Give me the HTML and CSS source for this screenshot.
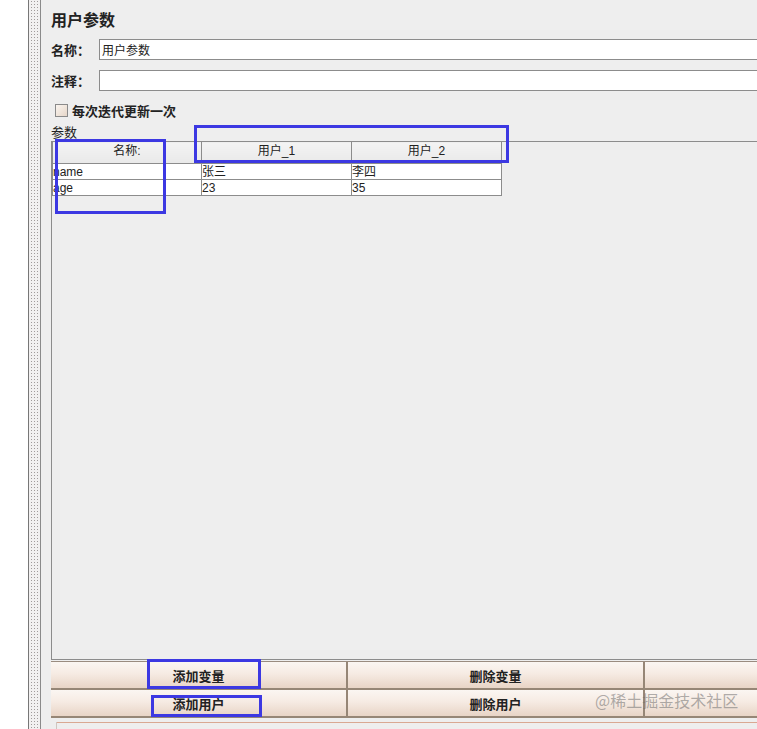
FILE: index.html
```html
<!DOCTYPE html>
<html lang="zh-CN">
<head>
    <meta charset="UTF-8">
    <title>用户参数</title>
    <link rel="stylesheet" href="styles.css">
</head>
<body>

<div class="app">
    <div class="gutter"></div>
    <div class="splitter"></div>

    <div class="panel">
        <!-- Title -->
        <div class="title">用户参数</div>

        <!-- Name / comment fields -->
        <div class="field-row">
            <label class="field-label">名称：</label>
            <input class="field-input" type="text" value="用户参数">
        </div>
        <div class="field-row second">
            <label class="field-label">注释：</label>
            <input class="field-input" type="text" value="">
        </div>

        <div class="check-row">
            <span class="check-box"></span>
            <span class="check-label">每次迭代更新一次</span>
        </div>

        <!-- Parameters table -->
        <div class="params-label">参数</div>
        <div class="params-box">
            <table class="params-table">
                <thead>
                    <tr>
                        <th class="col-name">名称:</th>
                        <th>用户_1</th>
                        <th>用户_2</th>
                    </tr>
                </thead>
                <tbody>
                    <tr><td>name</td><td>张三</td><td>李四</td></tr>
                    <tr><td>age</td><td>23</td><td>35</td></tr>
                </tbody>
            </table>
        </div>

        <!-- Buttons -->
        <div class="buttons">
            <button class="btn">添加变量</button>
            <button class="btn">删除变量</button>
            <button class="btn"></button>
            <button class="btn">添加用户</button>
            <button class="btn">删除用户</button>
            <button class="btn"></button>
        </div>

        <div class="status">
            <span class="status-box"></span>
            <span class="status-line"></span>
        </div>
    </div>
</div>

<!-- annotation boxes drawn over the screenshot -->
<div class="mark mark-name"></div>
<div class="mark mark-users"></div>
<div class="mark mark-add-var"></div>
<div class="mark mark-add-user"></div>

<div class="watermark">@稀土掘金技术社区</div>

</body>
</html>
```

FILE: styles.css
```css
body {
    margin: 0;
    background-color: white;
    font-family: "Liberation Sans", "Noto Sans CJK SC", sans-serif;
    color: #222;
    overflow: hidden;
    width: 757px;
    height: 729px;
    position: relative;
}

.app {
    display: flex;
    height: 729px;
    width: 1000px;
}

.gutter {
    width: 28px;
    background-color: white;
    border-right: 1px solid #777;
}

.splitter {
    width: 11px;
    border-right: 1px solid #8a8a8a;
    background-color: #f2f0f0;
    background-image: radial-gradient(#a09a9a 0.7px, transparent 0.9px);
    background-size: 3px 3px;
    background-position: 4px 0;
}

.panel {
    width: 921px;
    padding-left: 10px;
    background-color: #eeeeee;
    display: flex;
    flex-direction: column;
}

.title {
    margin-top: 8px;
    height: 22px;
    line-height: 22px;
    font-size: 16px;
    font-weight: bold;
    font-family: "Noto Sans CJK SC", sans-serif;
}

.field-row {
    display: flex;
    align-items: center;
    margin-top: 9px;
    height: 21px;
}

.field-row.second {
    margin-top: 10px;
}

.field-label {
    width: 48px;
    font-size: 13px;
    font-weight: bold;
    font-family: "Noto Sans CJK SC", sans-serif;
}

.field-input {
    flex: 1;
    height: 21px;
    box-sizing: border-box;
    border: 1px solid #8c8c8c;
    border-right: none;
    background-color: white;
    padding: 0 2px;
    font-size: 12px;
    font-family: "Noto Sans CJK SC", sans-serif;
    color: #222;
    outline: none;
}

.check-row {
    display: flex;
    align-items: center;
    margin-top: 12px;
    height: 14px;
    padding-left: 4px;
}

.check-box {
    width: 11px;
    height: 11px;
    border: 1px solid #8a8a8a;
    background: linear-gradient(135deg, #faf5f0, #e6d6c8);
    margin-right: 4px;
}

.check-label {
    font-size: 13px;
    font-weight: bold;
    font-family: "Noto Sans CJK SC", sans-serif;
}

.params-label {
    margin-top: 7px;
    height: 17px;
    line-height: 15px;
    font-size: 13px;
    font-family: "Noto Sans CJK SC", sans-serif;
}

.params-box {
    flex: 1;
    border-top: 1px solid #8c8c8c;
    border-left: 1px solid #8c8c8c;
    border-bottom: 1px solid #8c8c8c;
    margin-bottom: 1px;
}

.params-table {
    border-collapse: collapse;
    margin-top: -1px;
    font-size: 12px;
}

.params-table th {
    width: 150px;
    height: 22px;
    padding: 0 0 3px;
    border: 1px solid #8c8c8c;
    background: linear-gradient(#f4f4f4, #e9e9e9);
    font-weight: normal;
    font-family: "Liberation Sans", "Noto Sans CJK SC", sans-serif;
    line-height: 16px;
    box-sizing: border-box;
    vertical-align: middle;
}

.params-table th.col-name {
    width: 149px;
}

.params-table td {
    height: 15px;
    padding: 0;
    border: 1px solid #8c8c8c;
    background-color: white;
    line-height: 14px;
    font-family: "Liberation Sans", "Noto Sans CJK SC", sans-serif;
}

.buttons {
    display: grid;
    grid-template-columns: 297px 297px 297px;
    grid-template-rows: 28px 28px;
    border-top: 1px solid #9a8c80;
}

.btn {
    border: none;
    border-right: 2px solid #968676;
    border-bottom: 2px solid #968676;
    background: linear-gradient(#fbf6f2, #f6ebe3 45%, #e8d4c6);
    font-size: 13px;
    font-weight: bold;
    font-family: "Noto Sans CJK SC", sans-serif;
    color: #222;
    padding: 0;
}

.status {
    flex: none;
    height: 11px;
    display: flex;
    align-items: flex-start;
    margin-left: -4px;
    padding-top: 4px;
    box-sizing: border-box;
}

.status-box {
    width: 9px;
    height: 8px;
    border-right: 1px solid #cfc6c0;
}

.status-line {
    flex: 1;
    border-top: 1px solid #d9a892;
}

.mark {
    position: absolute;
    border: 3px solid #3c38e2;
    box-sizing: border-box;
}

.mark-name {
    left: 55px;
    top: 139px;
    width: 111px;
    height: 75px;
}

.mark-users {
    left: 194px;
    top: 125px;
    width: 315px;
    height: 38px;
}

.mark-add-var {
    left: 147px;
    top: 659px;
    width: 114px;
    height: 30px;
}

.mark-add-user {
    left: 151px;
    top: 695px;
    width: 111px;
    height: 22px;
}

.watermark {
    position: absolute;
    left: 595px;
    top: 688px;
    font-size: 16px;
    font-family: "Noto Sans CJK SC", sans-serif;
    color: rgba(110, 110, 110, 0.55);
}
```
